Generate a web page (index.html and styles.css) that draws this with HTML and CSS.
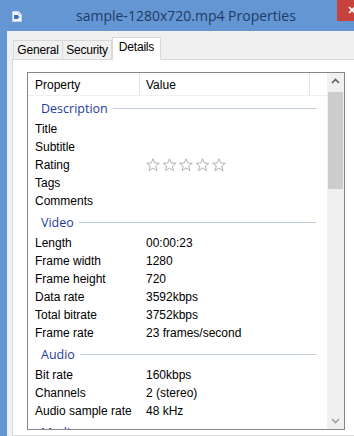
FILE: index.html
```html
<!DOCTYPE html>
<html>
<head>
<meta charset="utf-8">
<link rel="stylesheet" href="styles.css">
</head>
<body>
<div class="window">
  <div class="titlebar">
    <svg class="app-icon" width="10" height="11" viewBox="0 0 10 11">
      <path d="M0.5 0.5 H6.5 L9.5 3.5 V10.5 H0.5 Z" fill="#f4f6fa" stroke="#c9d3e2" stroke-width="1"/>
      <path d="M6.5 0.5 V3.5 H9.5" fill="#dfe6f0" stroke="#c9d3e2" stroke-width="1"/>
      <rect x="2" y="4" width="4" height="4" fill="#3a6fb7"/>
      <path d="M6 4.5 L8 6 L6 7.5 Z" fill="#5a8fd0"/>
    </svg>
    <div class="title">sample-1280x720.mp4 Properties</div>
    <div class="close">
      <svg class="close-x" width="17" height="21" viewBox="0 0 17 21">
        <rect x="0" y="0" width="17" height="21" fill="#c7423c"/>
        <path d="M12 7 L18 13 M18 7 L12 13" stroke="#fff" stroke-width="1.6"/>
      </svg>
    </div>
  </div>
  <div class="frame">
    <div class="client">
      <div class="tabs">
        <div class="tab">General</div>
        <div class="tab">Security</div>
        <div class="tab active">Details</div>
      </div>
      <div class="panel">
        <div class="listbox">
          <div class="list">
            <div class="header">
              <div class="hcol hcol1">Property</div>
              <div class="hcol hcol2">Value</div>
              <div class="hcol hcol3"></div>
            </div>
            <div class="group"><span class="gname">Description</span><span class="gline"></span></div>
            <div class="row"><span class="k">Title</span><span class="v"></span></div>
            <div class="row"><span class="k">Subtitle</span><span class="v"></span></div>
            <div class="row"><span class="k">Rating</span><span class="v">
              <svg class="stars" width="84" height="14" viewBox="0 0 84 14">
                <defs>
                  <path id="star" d="M7 0.8 L8.8 5 L13.3 5.2 L9.8 8.1 L11 12.6 L7 10.1 L3 12.6 L4.2 8.1 L0.7 5.2 L5.2 5 Z" fill="#fff" stroke="#a9a9a9" stroke-width="0.9" stroke-linejoin="round"/>
                </defs>
                <use href="#star" x="0"/>
                <use href="#star" x="16.5"/>
                <use href="#star" x="33"/>
                <use href="#star" x="49.5"/>
                <use href="#star" x="66"/>
              </svg>
            </span></div>
            <div class="row"><span class="k">Tags</span><span class="v"></span></div>
            <div class="row"><span class="k">Comments</span><span class="v"></span></div>
            <div class="group"><span class="gname">Video</span><span class="gline"></span></div>
            <div class="row"><span class="k">Length</span><span class="v">00:00:23</span></div>
            <div class="row"><span class="k">Frame width</span><span class="v">1280</span></div>
            <div class="row"><span class="k">Frame height</span><span class="v">720</span></div>
            <div class="row"><span class="k">Data rate</span><span class="v">3592kbps</span></div>
            <div class="row"><span class="k">Total bitrate</span><span class="v">3752kbps</span></div>
            <div class="row"><span class="k">Frame rate</span><span class="v">23 frames/second</span></div>
            <div class="group"><span class="gname">Audio</span><span class="gline"></span></div>
            <div class="row"><span class="k">Bit rate</span><span class="v">160kbps</span></div>
            <div class="row"><span class="k">Channels</span><span class="v">2 (stereo)</span></div>
            <div class="row"><span class="k">Audio sample rate</span><span class="v">48 kHz</span></div>
            <div class="group"><span class="gname">Media</span><span class="gline"></span></div>
          </div>
          <div class="scrollbar">
            <div class="sbtn">
              <svg width="17" height="17" viewBox="0 0 17 17"><path d="M5 10 L8.5 6.5 L12 10" fill="none" stroke="#606060" stroke-width="1.6"/></svg>
            </div>
            <div class="thumb"></div>
            <div class="track"></div>
            <div class="sbtn">
              <svg width="17" height="17" viewBox="0 0 17 17"><path d="M5 7 L8.5 10.5 L12 7" fill="none" stroke="#a0a0a0" stroke-width="1.6"/></svg>
            </div>
          </div>
        </div>
      </div>
    </div>
  </div>
</div>
</body>
</html>
```

FILE: styles.css
```css
* { box-sizing: border-box; }
html, body { margin: 0; padding: 0; }
body {
  width: 354px;
  height: 436px;
  overflow: hidden;
  background: #f0f0f0;
  font-family: "Liberation Sans", Arial, sans-serif;
  font-size: 12px;
  color: #000;
}
.window { display: flex; flex-direction: column; height: 436px; width: 354px; overflow: hidden; }
.titlebar {
  height: 31px;
  flex-shrink: 0;
  background-color: #6396d3;
  display: flex;
  align-items: flex-start;
}
.app-icon { margin: 11px 0 0 12px; flex-shrink: 0; }
.title {
  margin-left: 54px;
  font-family: "Open Sans", sans-serif;
  font-size: 14px;
  line-height: 31px;
  color: #1f3b66;
  white-space: nowrap;
}
.close {
  margin-left: auto;
  flex: 0 0 17px;
  width: 17px;
  height: 21px;
  background-color: #c7423c;
}
.close-x { display: block; }
.frame { flex: 1; display: flex; background: #6396d3; padding-left: 7px; min-height: 0; }
.client {
  flex: 1;
  background: #f0f0f0;
  padding: 6px 0 0 5px;
  display: flex;
  flex-direction: column;
  min-height: 0;
}
.tabs {
  display: flex;
  align-items: flex-end;
  height: 23px;
  padding-left: 1px;
  margin-bottom: -1px;
  position: relative;
  z-index: 1;
}
.tab {
  width: 50px;
  height: 20px;
  border: 1px solid #d9d9d9;
  background: #f0f0f0;
  line-height: 18px;
  margin-right: -1px;
  white-space: nowrap;
  text-align: center;
  letter-spacing: -0.2px;
}
.tab.active {
  width: 49px;
  height: 23px;
  background: #fff;
  border-bottom-color: #fff;
  line-height: 19px;
  margin-left: 1px;
}
.panel {
  flex: 1;
  background: #fff;
  border: 1px solid #d9d9d9;
  border-right: none;
  padding: 12px 0 0 14px;
  min-height: 0;
}
.listbox {
  width: 318px;
  height: 358px;
  border: 1px solid #828790;
  display: flex;
  background: #fff;
}
.list { flex: 1; overflow: hidden; }
.header {
  height: 23px;
  display: flex;
  border-bottom: 1px solid #eef0f4;
}
.hcol { line-height: 20px; padding-top: 2px; border-right: 1px solid #e5e5e5; }
.hcol1 { width: 112px; padding-left: 7px; }
.hcol2 { width: 170px; padding-left: 6px; }
.hcol3 { flex: 1; border-right: none; }
.group {
  height: 24px;
  display: flex;
  align-items: center;
  padding: 0 11px 0 13px;
}
.gname {
  font-family: "Open Sans", sans-serif;
  font-size: 12.5px;
  color: #1e3c9a;
}
.gline { flex: 1; height: 1px; background: #c3cedd; margin-left: 5px; }
.row { height: 18px; display: flex; align-items: center; }
.k { width: 118px; padding-left: 7px; white-space: nowrap; }
.v { white-space: nowrap; display: flex; align-items: center; }
.stars { display: block; }
.scrollbar {
  width: 17px;
  background: #f0f0f0;
  display: flex;
  flex-direction: column;
}
.sbtn { height: 17px; }
.sbtn svg { display: block; }
.thumb { height: 97px; margin: 2px 1px 0 1px; background: #cdcdcd; }
.track { flex: 1; }
```
